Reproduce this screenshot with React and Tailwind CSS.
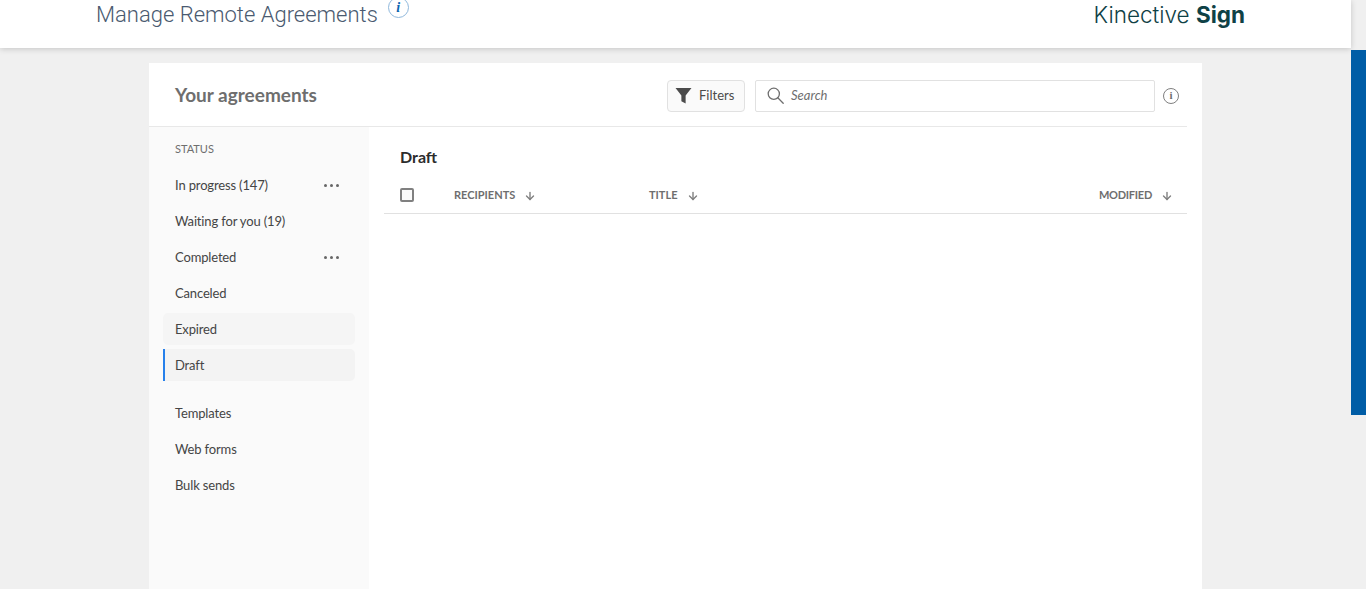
import { ArrowDown } from "lucide-react";

const adobe = "font-['Lato','Noto_Sans',sans-serif]";

function NavItem({ label, dots, hover, active }) {
  return (
    <div
      className={
        "flex h-8 w-[192px] items-center justify-between rounded-r-[5px] pt-[2px] pl-3 pr-[16px] text-[13px] tracking-[-0.15px] text-[#454545] " +
        (active
          ? "border-l-2 border-[#2680eb] bg-[#f3f3f3] !pl-[10px]"
          : hover
            ? "rounded-l-[5px] bg-[#f5f5f5]"
            : "")
      }
    >
      <span>{label}</span>
      {dots && (
        <span className="mt-[-2px] flex gap-[3px]">
          <i className="h-[3px] w-[3px] rounded-full bg-[#666]" />
          <i className="h-[3px] w-[3px] rounded-full bg-[#666]" />
          <i className="h-[3px] w-[3px] rounded-full bg-[#666]" />
        </span>
      )}
    </div>
  );
}

function ColHead({ label, tight }) {
  return (
    <span className="flex items-center gap-[9px] text-[11px] font-bold text-[#6e6e6e]">
      <span className={tight ? "tracking-[-0.25px]" : ""}>{label}</span>
      <ArrowDown size={12} strokeWidth={2.8} className="mt-[2px] text-[#808080]" />
    </span>
  );
}

export default function App() {
  return (
    <div className={"flex h-[589px] overflow-hidden bg-[#f0f0f0] " + adobe}>
      <div className="flex w-[1351px] flex-col">
        {/* top bar */}
        <header className="flex h-12 shrink-0 items-start justify-between bg-white pl-[96px] pr-[106px] shadow-[0_1px_6px_rgba(0,0,0,0.18)]">
          <div className="flex items-start">
            <h1 className="mt-[-1px] pt-[1px] font-['Roboto',sans-serif] text-[22px] leading-[30px] font-light text-[#4a5a70]">
              Manage Remote Agreements
            </h1>
            <span className="mt-[-3px] ml-[10px] flex h-[21px] w-[21px] items-center justify-center rounded-full border border-[#8fb8dc] font-['Liberation_Serif',serif] text-[14px] font-bold text-[#0b64b0] italic">
              i
            </span>
          </div>
          <div className="font-['Inter',sans-serif] text-[22.5px] leading-[30px] font-light text-[#0f4146]">
            Kinective <span className="font-bold">Sign</span>
          </div>
        </header>

        {/* card */}
        <div className="mt-[15px] ml-[149px] flex w-[1053px] flex-1 flex-col bg-white">
          <div className="mr-[15px] flex h-[64px] shrink-0 items-center border-b border-[#e8e8e8] pt-[2px] pl-[26px]">
            <h2 className="text-[19px] font-bold text-[#6e6e6e]">Your agreements</h2>
            <button className="ml-auto flex h-8 w-[78px] items-center gap-[7px] rounded-[4px] border border-[#e1e1e1] bg-[#fafafa] pl-[7px] text-[13px] text-[#4b4b4b]">
              <svg width="17" height="17" viewBox="0 0 16 16" fill="#4b4b4b">
                <path d="M0.5 1h15L10 8v7.5l-4-2V8z" />
              </svg>
              Filters
            </button>
            <div className="ml-[10px] flex h-8 w-[400px] items-center gap-[7px] rounded-[2px] border border-[#e1e1e1] pl-[11px] text-[13px] text-[#6e6e6e] italic">
              <svg width="17" height="17" viewBox="0 0 17 17" fill="none" stroke="#6e6e6e" strokeWidth="1.3">
                <circle cx="6.8" cy="6.8" r="5.6" />
                <path d="M10.8 10.8l5.4 5.4" strokeLinecap="round" />
              </svg>
              Search
            </div>
            <span className="mr-[8px] ml-[8px] flex h-4 w-4 items-center justify-center rounded-full border border-[#808080] font-['Liberation_Serif',serif] text-[11px] font-bold text-[#6e6e6e]">
              i
            </span>
          </div>

          <div className="flex flex-1">
            <aside className="w-[220px] shrink-0 bg-[#fafafa] pt-[15px] pl-[14px]">
              <div className="mb-[14px] pl-3 text-[11px] leading-[13px] text-[#6e6e6e]">STATUS</div>
              <div className="flex flex-col gap-1">
                <NavItem label="In progress (147)" dots />
                <NavItem label="Waiting for you (19)" />
                <NavItem label="Completed" dots />
                <NavItem label="Canceled" />
                <NavItem label="Expired" hover />
                <NavItem label="Draft" active />
              </div>
              <div className="mt-4 flex flex-col gap-1">
                <NavItem label="Templates" />
                <NavItem label="Web forms" />
                <NavItem label="Bulk sends" />
              </div>
            </aside>

            <main className="mr-[15px] flex-1 pl-[15px]">
              <h3 className="mt-[20px] pl-4 text-[16px] leading-5 font-bold text-[#2c2c2c]">Draft</h3>
              <div className="mt-[10px] flex h-[37px] items-center border-b border-[#e1e1e1] pl-[16px]">
                <span className="h-[14px] w-[14px] rounded-[2px] border-2 border-[#808080] bg-[#fafafa]" />
                <span className="ml-[40px] w-[195px]">
                  <ColHead label="RECIPIENTS" />
                </span>
                <ColHead label="TITLE" />
                <span className="mr-[14px] ml-auto">
                  <ColHead label="MODIFIED" tight />
                </span>
              </div>
            </main>
          </div>
        </div>
      </div>

      {/* page scroll thumb */}
      <div className="w-[15px] pt-[50px]">
        <div className="h-[365px] bg-[#005da6]" />
      </div>
    </div>
  );
}
